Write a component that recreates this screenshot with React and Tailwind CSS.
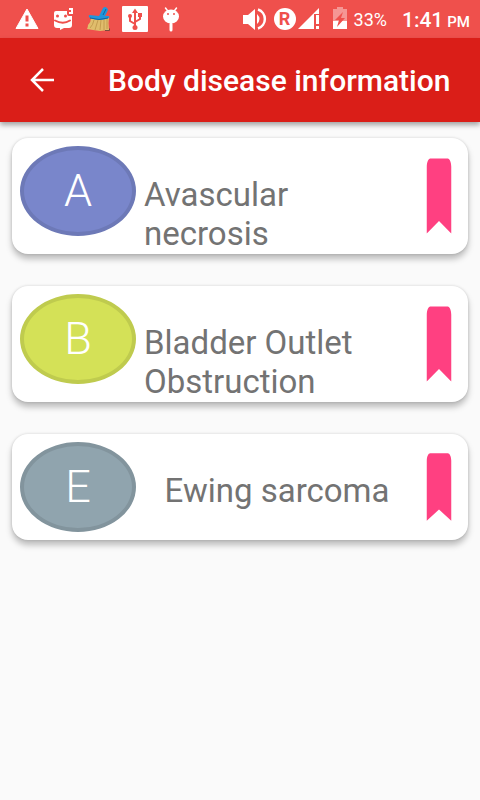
const diseases = [
  { letter: 'A', name: 'Avascular necrosis', color: 'bg-[#7986cb] border-[#6d79b7]' },
  { letter: 'B', name: 'Bladder Outlet Obstruction', color: 'bg-[#d4e157] border-[#bfcb4e]' },
  { letter: 'E', name: 'Ewing sarcoma', color: 'bg-[#90a4ae] border-[#82949d]' },
];

function NotificationIcons() {
  return (
    <div className="flex pl-[9px]" aria-hidden="true">
      <svg className="h-[38px] w-9" viewBox="0 0 36 38">
        <path d="M18 9 L29 28.500 H7 Z" fill="#fff" stroke="#fff" strokeWidth="1" strokeLinejoin="round" />
        <path d="M16.500 15.500h3v6h-3zM16.500 23.500h3v3h-3z" fill="#ef504c" />
      </svg>
      <svg className="h-[38px] w-9" viewBox="0 0 36 38">
        <path
          d="M11 11h11v3a2 2 0 0 0 2 2h3v9a3 3 0 0 1-3 3h-5l-4 2v-2h-3a3 3 0 0 1-3-3V13a2 2 0 0 1 2-2z"
          fill="#fff"
        />
        <path d="M24 8h4v6h-4v-2h2v-2h-2z" fill="#fff" />
        <circle cx="12.500" cy="16" r="1.500" fill="#ef504c" />
        <circle cx="20.500" cy="16" r="1.500" fill="#ef504c" />
        <path d="M10 20.500q8 4.500 15 0" fill="none" stroke="#ef504c" strokeWidth="2" strokeLinecap="round" />
      </svg>
      <svg className="h-[38px] w-9" viewBox="0 0 36 38">
        <path d="M10 18q9 3 18-1-1 6 0 13l-9 1-7-1-6-1q1-2 1-4 3-3 3-7z" fill="#e0bd6c" />
        <path
          d="M13 20q-1 5-4 8M17 20l-3 10M20 20l-1 10M23 20v10M26 19v10"
          stroke="#bd9348"
          strokeWidth="0.800"
          fill="none"
        />
        <path d="M24 30.500h4.500v-2" stroke="#7d4a3c" strokeWidth="1" fill="none" />
        <path d="M8 15l10 1 4-8q2-2 4 0 1 1 1 2l-3 6h3q2 0 1 2-9 4-19 0-2-1-1-3z" fill="#2196dc" />
        <path d="M9 18q9 3 18 0M22 15l3-6" stroke="#1263a0" strokeWidth="1" fill="none" />
      </svg>
      <svg className="h-[38px] w-9" viewBox="0 0 36 38">
        <rect x="5" y="6" width="26" height="26" rx="1" fill="#fff" />
        <g fill="none" stroke="#ef504c" strokeWidth="2">
          <path d="M18 12v15M18 24l-5-3v-5M18 22l5-3v-5" />
        </g>
        <path d="M18 8.500l3 4.500h-6z" fill="#ef504c" />
        <circle cx="18" cy="27.500" r="2.500" fill="#ef504c" />
        <circle cx="13" cy="16" r="2" fill="#ef504c" />
        <rect x="21" y="13" width="4" height="4" fill="#ef504c" />
      </svg>
      <svg className="h-[38px] w-9" viewBox="0 0 36 38">
        <path d="M12.500 8l3 4M23.500 8l-3 4" stroke="#fff" strokeWidth="1.500" strokeLinecap="round" />
        <ellipse cx="18" cy="16.500" rx="8" ry="7" fill="#fff" />
        <path d="M18 24v6" stroke="#fff" strokeWidth="3" strokeLinecap="round" />
        <circle cx="15" cy="14" r="1" fill="#ef504c" />
        <circle cx="21" cy="14" r="1" fill="#ef504c" />
      </svg>
    </div>
  );
}

function StatusBar() {
  return (
    <div className="flex h-[38px] items-center justify-between bg-[#ef504c] pr-[10px] text-white">
      <NotificationIcons />
      <div className="flex items-center">
        <svg className="mr-1 h-[38px] w-[30px]" viewBox="0 0 30 38" aria-hidden="true">
          <path d="M3 15h5l7-6v21l-7-6H3z" fill="#fff" />
          <path d="M17 14q5 5 0 10z" fill="#fff" />
          <path d="M18 9.500a10 10 0 0 1 0 19" fill="none" stroke="#fff" strokeWidth="2.500" />
        </svg>
        <span className="flex h-[22px] w-[22px] items-center justify-center rounded-full bg-white text-lg leading-none font-bold text-[#ef504c]">
          R
        </span>
        <svg className="h-[38px] w-6" viewBox="0 0 24 38" aria-hidden="true">
          <path d="M2 29L23 8v6h-5v15z" fill="#fff" />
          <path d="M20 15h3v9h-3zM20 26h3v3h-3z" fill="#fff" />
        </svg>
        <svg className="mr-1 ml-2.5 h-[38px] w-5" viewBox="0 0 20 38" aria-hidden="true">
          <path d="M3 9h4V7h6v2h4v20H3z" fill="#f59694" />
          <path d="M3 21h14v8H3z" fill="#fff" />
          <path d="M13 12l-8 8h4l-2 7 8-9h-4z" fill="#ef504c" />
        </svg>
        <span className="pt-0.5 text-lg leading-6">33%</span>
        <span className="ml-[15px] pt-0.5 text-[21px] leading-6 font-medium">1:41</span>
        <span className="ml-1 pt-1.5 text-[15px] leading-5 font-medium">PM</span>
      </div>
    </div>
  );
}

function AppBar() {
  return (
    <header className="relative flex h-[84px] items-center bg-[#da1e18] text-white shadow-[0_3px_5px_rgba(0,0,0,0.35)]">
      <button type="button" aria-label="Back" className="flex h-[84px] w-[84px] items-center justify-center">
        <svg className="h-9 w-9" viewBox="0 0 36 36" fill="none" stroke="currentColor" strokeWidth="2.500">
          <path d="M19 7L8 18l11 11M8 18h22" />
        </svg>
      </button>
      <h1 className="pt-0.5 pl-6 text-[30px] leading-9 font-medium whitespace-nowrap">
        Body disease information
      </h1>
    </header>
  );
}

function DiseaseCard({ disease }) {
  return (
    <li className="flex gap-2 rounded-2xl bg-white px-2 pt-2 shadow-[0_5px_6px_rgba(0,0,0,0.25),0_0_3px_rgba(0,0,0,0.15)]">
      <div
        className={`mb-2 flex h-[90px] w-[116px] shrink-0 items-center justify-center rounded-[50%] border-4 pb-0.5 text-[45px] leading-none font-light text-white ${disease.color}`}
      >
        {disease.letter}
      </div>
      <div className="flex flex-1 justify-center pt-[29px] pb-px">
        <h2 className="text-[33px] leading-[39px] text-[#737373]">{disease.name}</h2>
      </div>
      <button type="button" aria-label={`Bookmark ${disease.name}`} className="mb-2 grid w-[42px] shrink-0">
        <svg
          className="h-0 min-h-full w-full"
          viewBox="0 0 24 24"
          preserveAspectRatio="none"
          fill="#ff4081"
        >
          <path d="M17 3H7c-1.100 0-1.990.9-1.990 2L5 21l7-3 7 3V5c0-1.100-.9-2-2-2z" />
        </svg>
      </button>
    </li>
  );
}

export default function App() {
  return (
    <div className="min-h-screen bg-[#fafafa] font-[Roboto,sans-serif]">
      <StatusBar />
      <AppBar />
      <main className="px-3 py-4">
        <ul className="flex flex-col gap-8">
          {diseases.map((disease) => (
            <DiseaseCard key={disease.letter} disease={disease} />
          ))}
        </ul>
      </main>
    </div>
  );
}
